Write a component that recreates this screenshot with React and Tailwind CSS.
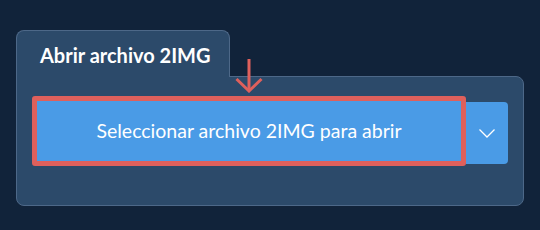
import React from 'react';

export default function App() {
  return (
    <div className="w-[540px] h-[230px] bg-[#11233a] pt-[30px] px-4 font-['Lato',sans-serif]">
      <div className="flex flex-col">
        {/* Tab */}
        <div className="relative z-10 -mb-px w-[214px] h-[47px] bg-[#2c4a6a] border border-b-0 border-[#4d6888] rounded-t-lg pl-[23px] pt-[12px]">
          <span className="block text-white font-bold text-[20px] leading-[24px]">Abrir archivo 2IMG</span>
        </div>
        {/* Panel */}
        <div className="h-[130px] bg-[#2c4a6a] border border-[#4d6888] rounded-b-lg rounded-tr-lg pl-[15px] pt-[19px]">
          <div className="flex items-start">
            <div className="relative">
              <button
                type="button"
                className="w-[434px] h-[70px] bg-[#4a9be6] border-[5px] border-[#df605c] rounded-[3px] flex items-center justify-center text-white text-[19.5px]"
              >
                Seleccionar archivo 2IMG para abrir
              </button>
              <svg
                className="absolute left-[203px] top-[-37px]"
                width="28"
                height="34"
                viewBox="0 0 28 34"
                fill="none"
                stroke="#df605c"
                strokeWidth="3"
              >
                <path d="M14 0V32" />
                <path d="M1.5 20L14 32L26.5 20" />
              </svg>
            </div>
            <button
              type="button"
              className="mt-[6px] w-[42px] h-[62px] bg-[#4a9be6] rounded-r-[4px] flex items-center justify-center"
            >
              <svg width="16" height="9" viewBox="0 0 16 9" fill="none" stroke="white" strokeWidth="1.3">
                <path d="M0.5 0.5L8 8L15.5 0.5" />
              </svg>
            </button>
          </div>
        </div>
      </div>
    </div>
  );
}
